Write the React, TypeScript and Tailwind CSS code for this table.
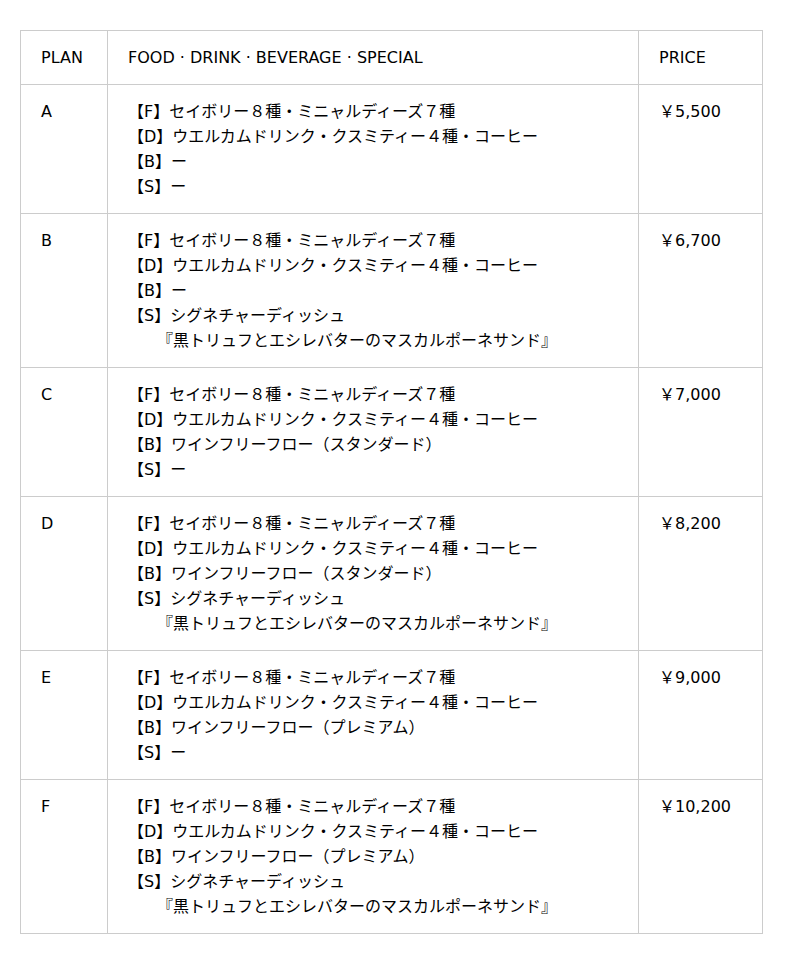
const common = [
  '【F】セイボリー８種・ミニャルディーズ７種',
  '【D】ウエルカムドリンク・クスミティー４種・コーヒー',
];

const sand = '『黒トリュフとエシレバターのマスカルポーネサンド』';

const plans = [
  { plan: 'A', lines: [...common, '【B】ー', '【S】ー'], sub: '', price: '￥5,500' },
  { plan: 'B', lines: [...common, '【B】ー', '【S】シグネチャーディッシュ'], sub: sand, price: '￥6,700' },
  { plan: 'C', lines: [...common, '【B】ワインフリーフロー（スタンダード）', '【S】ー'], sub: '', price: '￥7,000' },
  {
    plan: 'D',
    lines: [...common, '【B】ワインフリーフロー（スタンダード）', '【S】シグネチャーディッシュ'],
    sub: sand,
    price: '￥8,200',
  },
  { plan: 'E', lines: [...common, '【B】ワインフリーフロー（プレミアム）', '【S】ー'], sub: '', price: '￥9,000' },
  {
    plan: 'F',
    lines: [...common, '【B】ワインフリーフロー（プレミアム）', '【S】シグネチャーディッシュ'],
    sub: sand,
    price: '￥10,200',
  },
];

const cell = 'border border-[#cccccc] px-5 py-[14px] align-top text-left font-normal';

export default function App() {
  return (
    <div className="min-h-[964px] bg-white pt-[30px] pl-5 text-[16px] leading-[25px] text-black [font-family:'DejaVu_Sans','Noto_Sans_CJK_JP',sans-serif]">
      <table className="w-[742px] border-collapse table-fixed">
        <colgroup>
          <col className="w-[87px]" />
          <col className="w-[531px]" />
          <col className="w-[124px]" />
        </colgroup>
        <thead>
          <tr>
            <th className={cell}>PLAN</th>
            <th className={cell}>FOOD · DRINK · BEVERAGE · SPECIAL</th>
            <th className={cell}>PRICE</th>
          </tr>
        </thead>
        <tbody>
          {plans.map((p) => (
            <tr key={p.plan}>
              <td className={cell}>{p.plan}</td>
              <td className={cell}>
                {p.lines.map((l, i) => (
                  <div key={i} className="whitespace-pre">{l}</div>
                ))}
                {p.sub && <div className="pl-[29px]">{p.sub}</div>}
              </td>
              <td className={cell}>{p.price}</td>
            </tr>
          ))}
        </tbody>
      </table>
    </div>
  );
}
